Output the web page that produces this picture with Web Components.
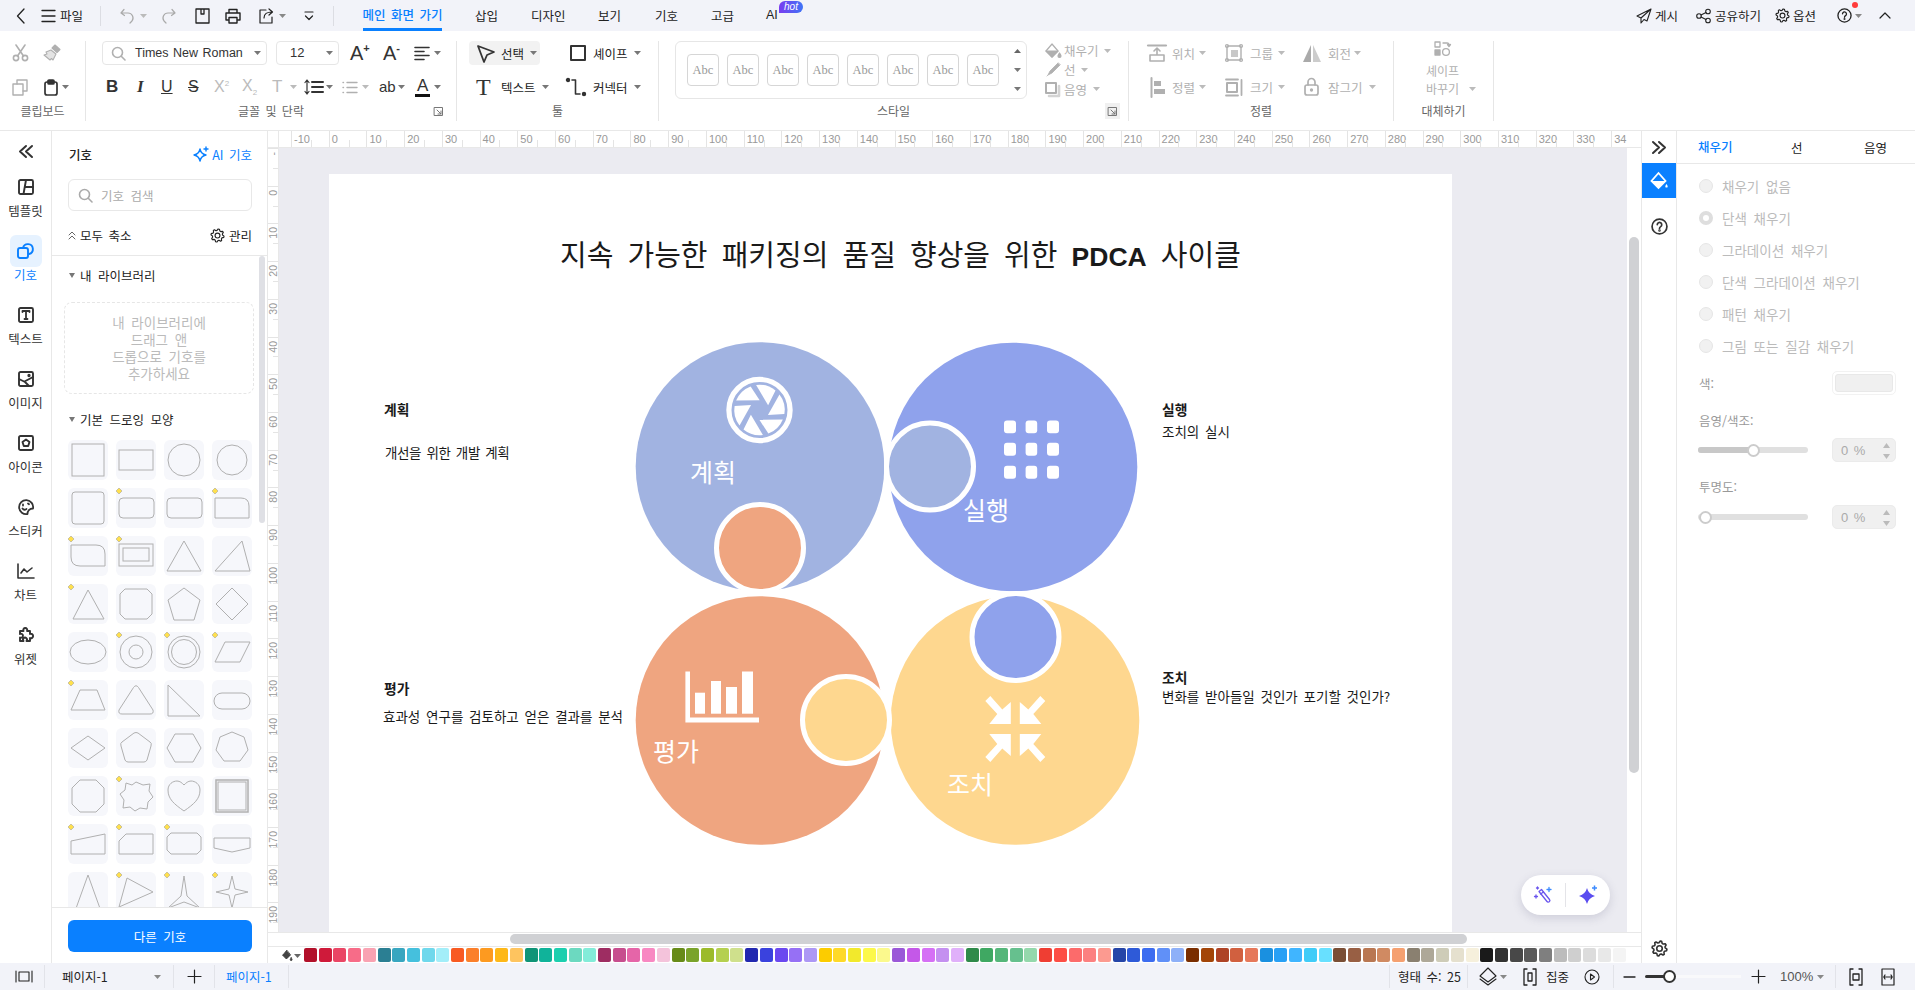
<!DOCTYPE html>
<html lang="ko"><head><meta charset="utf-8"><title>PDCA</title>
<style>
html,body{margin:0;padding:0;height:100%;overflow:hidden;background:#fff}
body{font:12.5px/1.2 "Noto Sans CJK KR","Noto Sans",sans-serif;color:#222;word-spacing:2px}
</style></head><body>
<x-app></x-app>
<script>
const BLUE='#0a80ff';
const BASE=`:host{display:block;box-sizing:border-box}*{box-sizing:border-box}
.r{display:grid;align-items:center;white-space:nowrap}.c{display:flex;align-items:center;min-width:0;white-space:nowrap}
svg{display:block;flex:none;overflow:visible}.mut{color:#aaa}.lat{font-family:"Liberation Sans",sans-serif}`;
const row=(x0,items,h)=>{let cols=[];for(let i=0;i<items.length-1;i++)cols.push((items[i+1][0]-items[i][0])+'px');cols.push('auto');
 return `<div class="r" style="padding-left:${items[0][0]-x0}px;height:${h}px;grid-template-columns:${cols.join(' ')}">`+items.map(i=>`<div class="c">${i[1]}</div>`).join('')+`</div>`};
const S=(inner,w=16,h=w,vw=w,vh=h,sw=1.3)=>`<svg width="${w}" height="${h}" viewBox="0 0 ${vw} ${vh}" fill="none" stroke="currentColor" stroke-width="${sw}" stroke-linecap="round" stroke-linejoin="round">${inner}</svg>`;
const col=(c,s)=>`<span style="color:${c};display:inline-flex;align-items:center">${s}</span>`;
const caret=(c='#888')=>`<svg width="7" height="4" viewBox="0 0 7 4"><path d="M0 0h7L3.5 4z" fill="${c}"/></svg>`;
const gearPath=(cx,cy,R,r,n=8)=>{let d='';for(let i=0;i<n*4;i++){const a=i*Math.PI*2/(n*4)-Math.PI/2+Math.PI/(n*4);const rr=(i%4<2)?R:r;d+=(i?'L':'M')+(cx+rr*Math.cos(a)).toFixed(2)+' '+(cy+rr*Math.sin(a)).toFixed(2)}return d+'Z'};
const gear=(s=16,sw=1.2)=>S(`<path d="${gearPath(8,8,7,5.4)}"/><circle cx="8" cy="8" r="2.6"/>`,s,s,16,16,sw);
const help=(s=16,sw=1.4)=>S(`<circle cx="8" cy="8" r="7"/><path d="M5.9 6.2a2.1 2.1 0 1 1 3.2 1.9c-.8.5-1.1.9-1.1 1.8"/><circle cx="8" cy="11.8" r=".4" fill="currentColor"/>`,s,s,16,16,sw);
const I={
 back:S('<path d="M8 1 1.5 8 8 15"/>',9,16,9,16,1.3),
 menu:S('<path d="M0 1.5h13M0 7h13M0 12.5h13"/>',13,14,13,14,1.3),
 undo:S('<path d="M4 1.5 1 5l3.5 2.5M1.5 5H8a5 5 0 0 1 4 8l-2 2"/>',14,16,14,16,1.2),
 redo:S('<path d="M10 1.5 13 5 9.5 7.5M12.5 5H6a5 5 0 0 0-4 8l2 2"/>',14,16,14,16,1.2),
 save:S('<path d="M1 1h13v14H1zM6 1v5h3V1"/>',15,16,15,16,1.3),
 print:S('<path d="M4 5V1.5h8V5M3.5 12H1V5h14v7h-2.5"/><path d="M4 9.5h8V15H4z"/>',16,16,16,16,1.4),
 export:S('<path d="M7 2H1v13h12V9"/><path d="M5 10c0-4 3-6 8-6M10 1l3.5 3L10 7"/>',15,16,15,16,1.2),
 more:S('<path d="M1 1h8M1.5 5 5 8.5 8.5 5"/>',10,10,10,10,1.2),
 send:S('<path d="M15 1 1 8l4 2zM15 1 5 10v5l3-3.5 3 1.5z"/>',16,16,16,16,1.1),
 share:S('<circle cx="3" cy="8" r="2.3"/><circle cx="12" cy="3.5" r="2.3"/><circle cx="12" cy="12.5" r="2.3"/><path d="M5 7l5-2.5M5 9l5 2.5"/>',15,16,15,16,1.1),
 up:S('<path d="M1 6 6 1l5 5"/>',12,7,12,7,1.2),
 cut:S('<circle cx="4" cy="14" r="2.6"/><circle cx="13" cy="14" r="2.6"/><path d="M5.5 12 13 1M11.5 12 4 1"/>',17,18,17,18,1.6),
 brush:S('<path d="M12 1l5 4.5-3 3L9 4z" fill="currentColor"/><path d="M8 6l5 4-3 6-1.5-1.5L7 16 1 11l3-1-1-2z" fill="currentColor" fill-opacity=".35"/>',18,18,18,18,1.1),
 copy:S('<path d="M1 5h10v11H1z"/><path d="M5 5V1h10v11h-4"/>',16,17,16,17,1.4),
 paste:S('<rect x="1" y="3" width="12" height="13" rx="2"/><rect x="4" y="1" width="6" height="4" rx="1" fill="currentColor"/>',14,17,14,17,1.7),
 search:S('<circle cx="6.5" cy="6.5" r="5"/><path d="M10.5 10.5 14 14"/>',14,14,14,14,1.6),
 align:S('<path d="M0 1.5h14M0 5.5h9M0 9.5h14M0 13.5h9"/>',14,15,14,15,1.6),
 spacing:S('<path d="M3 1v14M1 3.5 3 1l2 2.5M1 12.5 3 15l2-2.5"/><path d="M8 3h11M8 8h11M8 13h11" stroke-width="2"/>',19,16,19,16,1.2),
 list:S('<path d="M5 2.5h10M5 7.5h10M5 12.5h10M1 2.5h.5M1 7.5h.5M1 12.5h.5"/>',16,15,16,15,1.4),
 cursor:S('<path d="M2 2l16 6-7 3-3 7z"/>',19,19,19,19,1.8),
 square:S('<rect x="1" y="1" width="14" height="14"/>',16,16,16,16,2),
 conn:S('<circle cx="2" cy="2" r="1.4" fill="currentColor"/><path d="M6 2h3.5v14H14"/><circle cx="18" cy="16" r="1.4" fill="currentColor"/>',20,18,20,18,1.6),
 bucket:S('<path d="M7 1 1 8l6 6 6-6z"/><path d="M1 8h12l-6 6z" fill="currentColor"/><path d="M14.5 10c1 1.5 1.5 2 1.5 3a1.5 1.5 0 0 1-3 0c0-1 .5-1.5 1.5-3z" fill="currentColor"/>',17,16,17,16,1.2),
 pen:S('<path d="M13 1 5 9l-2 4 4-2 8-8z" fill="currentColor"/><path d="M2 14l1-1"/>',16,15,16,15,.8),
 shade:S('<rect x="1" y="1" width="10" height="10" stroke-width="2"/><path d="M4 14h10V4" stroke-width="2.6" opacity=".55"/>',15,15,15,15,1),
 pos:S('<path d="M0 1.5h18" stroke-width="2.2"/><path d="M9 4v6M6 7l3-3 3 3M2 11h14v6H2z" stroke-width="1.6"/>',18,19,18,19,1.5),
 alignL:S('<path d="M1.5 0v19" stroke-width="2"/><rect x="4" y="3" width="7" height="5" fill="currentColor" stroke="none"/><rect x="4" y="11" width="11" height="5" fill="currentColor" stroke="none"/>',16,19,16,19,1),
 group:S('<rect x="2" y="2" width="14" height="14" stroke-width="1.4"/><rect x="6" y="6" width="7" height="7" fill="currentColor" stroke="none" opacity=".7"/><circle cx="2" cy="2" r="1.5"/><circle cx="16" cy="2" r="1.5"/><circle cx="2" cy="16" r="1.5"/><circle cx="16" cy="16" r="1.5"/>',18,18,18,18,1.2),
 size:S('<path d="M1 1.5h12M1 17.5h12M16.5 2v15" stroke-width="1.8"/><rect x="2" y="5" width="10" height="9" stroke-width="2"/>',18,19,18,19,1.2),
 flip:`<svg width="18" height="17" viewBox="0 0 18 17"><path d="M8 0v17H0z" fill="#aaa"/><path d="M10 0v17h8z" fill="#ccc"/></svg>`,
 lock:S('<rect x="1" y="7" width="13" height="10" rx="2"/><path d="M4 7V4a3.5 3.5 0 0 1 7 0v3"/><circle cx="7.5" cy="12" r=".8" fill="currentColor"/>',15,18,15,18,1.7),
 replace:S('<rect x="1" y="1" width="5" height="5" /><rect x="1" y="9" width="5" height="5" fill="currentColor"/><circle cx="12" cy="11" r="3.4"/><path d="M9 2h4a2 2 0 0 1 2 2v1M13.5 3.5 15 5.5l1.5-2" />',18,16,18,16,1.3),
 launch:S('<rect x=".5" y=".5" width="8" height="8" /><path d="M3 3l4 4M7 4v3H4"/>',9,9,9,9,1),
 side:S('<path d="M1 1v11M17 1v11M4 2h10v9H4z"/>',18,13,18,13,1.1),
 plus:S('<path d="M6.5 0v13M0 6.5h13"/>',13,13,13,13,1.2),
 layers:S('<path d="M9 1l8 8-8 6-8-6z"/><path d="M1 12l8 6 8-6"/>',18,19,18,19,1.1),
 focus:S('<path d="M4 1H1v16h3M10 1h3v16h-3"/><rect x="5" y="5" width="4" height="8"/>',14,18,14,18,1.3),
 play:S('<circle cx="8" cy="8" r="7"/><path d="M6.5 5l4 3-4 3z"/>',16,16,16,16,1.1),
 fit:S('<path d="M4 1H1v16h3M10 1h3v16h-3"/><rect x="4" y="6" width="6" height="6"/>',14,18,14,18,1.3),
 fitw:S('<path d="M1 1v16h12V1zM3 9h8M4 7 2.8 9 4 11M10 7l1.2 2L10 11"/>',14,18,14,18,1.2),
 dbl:S('<path d="M7 1 1 6.5 7 12M13 1 7 6.5 13 12"/>',14,13,14,13,2),
 dblr:S('<path d="M1 1l6 5.5L1 12M7 1l6 5.5L7 12"/>',14,13,14,13,2),
 star:S('<path d="M8 3q1 5 6 6-5 1-6 6-1-5-6-6 5-1 6-6z"/><path d="M14 1v4M12 3h4"/>',17,17,17,17,1.4),
 chevUp:S('<path d="M1 4l3-3 3 3M1 8l3-3 3 3"/>',8,9,8,9,1),
};
const rail={
 tpl:S('<rect x="1" y="1" width="14" height="14" rx="1.5"/><path d="M5.5 15 8 1M7 8h8"/>',16,16,16,16,1.9),
 sym:S('<rect x="1" y="5" width="10" height="10" rx="2"/><path d="M6 5a5 5 0 1 1 6 6"/>',17,16,17,16,1.9),
 text:S('<rect x="1" y="1" width="14" height="14" rx="1.5"/><path d="M4.5 5V4h7v1M8 4v8M6.5 12h3" stroke-width="1.8"/>',16,16,16,16,1.9),
 img:S('<rect x="1" y="1" width="14" height="14" rx="1.5"/><path d="M1 8l6 3 4 4M6.5 10.5 15 6"/><circle cx="11" cy="4.5" r=".7" fill="currentColor"/>',16,16,16,16,1.9),
 icon:S('<rect x="1" y="1" width="14" height="14" rx="1.5"/><path d="M8 4.5 11.5 7 10.2 11H5.8L4.5 7z"/>',16,16,16,16,1.9),
 sticker:S('<path d="M15 9.5A7 7 0 1 0 9.5 15c0-3 2-5.5 5.5-5.5z"/><path d="M5 5.5v1M10 4.5l1 .8M4.5 9.5c1 1.5 2.5 1.5 4 .5"/>',16,16,16,16,1.8),
 chart:S('<path d="M1 1v14h16"/><path d="M4 10l3-4 3 3 5-4"/>',18,16,18,16,1.6),
 widget:S('<path d="M3 5h3.5a2 2 0 1 1 3.5 0h3v3a2.2 2.2 0 1 1 0 4v3H9.5a2 2 0 1 0-3 0H3v-3.5a2 2 0 1 0 0-3.5z" transform="translate(0 -1)"/>',17,16,17,16,1.9)
};

class Base extends HTMLElement{connectedCallback(){if(this.shadowRoot)return;this.attachShadow({mode:'open'}).innerHTML=`<style>${BASE}${this.css()}</style>${this.html()}`;}css(){return''}html(){return'<slot></slot>'}}
const def=(n,c)=>customElements.define(n,c);

def('x-titlebar',class extends Base{
 css(){return`:host{height:31px;background:#f2f3f9}.sep{width:1px;height:20px;background:#dcdde3}
 .tab{height:31px;display:flex;align-items:center;padding-bottom:1px}.on{color:${BLUE};border-bottom:3px solid ${BLUE};width:79px;justify-content:center;padding-bottom:0;font-weight:500}
 .ai{position:relative}.hot{position:absolute;left:13px;top:1px;width:24px;height:12px;border-radius:6px 6px 6px 0;background:linear-gradient(90deg,#7a3cf0,#3f74f6);color:#fff;font:italic 10px/12px "Liberation Sans",sans-serif;text-align:center}`}
 html(){const t=x=>`<div class="tab">${x}</div>`;const g='#aaa';
 return row(0,[[16,I.back],[42,I.menu],[60,'파일'],[100,'<div class="sep"></div>'],[120,col(g,I.undo)],[140,caret('#bbb')],[162,col(g,I.redo)],[195,I.save],[225,I.print],[259,I.export],[279,caret()],[304,I.more],[333,'<div class="sep"></div>'],
 [363,`<div class="tab on">메인 화면 가기</div>`],[475,t('삽입')],[531,t('디자인')],[598,t('보기')],[655,t('기호')],[711,t('고급')],[766,`<div class="tab ai lat" style="overflow:visible">AI<span class="hot">hot</span></div>`],
 [1636,I.send],[1655,'게시'],[1696,I.share],[1715,'공유하기'],[1775,gear(15)],[1793,'옵션'],[1837,`<span style="position:relative;display:block">${help(15)}<span style="position:absolute;left:15px;top:-6px;width:6px;height:6px;border-radius:50%;background:#ff3b3b"></span></span>`],[1855,caret()],[1879,I.up]],31)}
});

def('rb-group',class extends Base{
 css(){return`:host{height:80px;margin-top:10px;border-right:1px solid #e6e6e6;flex:none}.b{height:60px}.l{display:grid;grid-template-columns:1fr auto 1fr;align-items:center;height:20px;color:#666;font-size:12px}.l b{font-weight:400}.lz{grid-column:3;justify-self:end;margin-right:10px;width:15px;height:16px;display:flex;align-items:center;justify-content:center;color:#777}.lz.h{background:#f0f0f0;margin-right:8px}`}
 html(){const z=this.getAttribute('launch');return `<div class="b"><slot></slot></div><div class="l"><b style="grid-column:2">${this.getAttribute('label')}</b>${z!=null?`<div class="lz ${z}">${I.launch}</div>`:''}</div>`}
});

def('x-abc',class extends Base{
 css(){return`:host{width:32px;height:32px;border:1px solid #d6d6d6;border-radius:4px;display:flex;align-items:center;justify-content:center;font:12.5px "Liberation Serif",serif;color:#999;background:#fff}`}
});

def('x-ribbon',class extends Base{
 css(){return`:host{height:100px;background:#fff;border-bottom:1px solid #e8e8e8;display:flex}
 .g{color:#b0b0b0}.k{color:#333}.ff{height:24px;border:1px solid #e6e6e6;border-radius:4px;display:flex;align-items:center;background:#fff;position:relative}
 .t{font-family:"Liberation Sans",sans-serif;color:#333}.sel{height:24px;width:71px;background:#f2f2f2;border-radius:4px;display:flex;align-items:center;padding-left:7px}
 .rr+.rr{margin-top:10px}.gal{width:352px;height:58px;border:1px solid #e6e6e6;border-radius:6px;display:flex;align-items:center;gap:8px;padding-left:11px;position:relative}
 .arr{margin-left:auto;width:18px;height:56px;display:flex;flex-direction:column;align-items:center;justify-content:space-between;padding:7px 0}
 .st{display:flex}.fills{margin-left:18px;color:#b0b0b0;display:flex;flex-direction:column;justify-content:space-around;height:58px}.fills .r{height:20px}`}
 html(){
 const g=x=>col('#b0b0b0',x),k=x=>col('#333',x),cg=caret('#bbb'),ck=caret('#777');
 const t=(s,st='')=>`<span class="t" style="${st}">${s}</span>`;
 const group1=`<rb-group label="클립보드" style="width:86px"><div class="rr">${row(0,[[12,g(I.cut)],[43,g(I.brush)]],24)}</div><div class="rr">${row(0,[[12,g(I.copy)],[44,k(I.paste)],[62,ck]],24)}</div></rb-group>`;
 const group2=`<rb-group label="글꼴 및 단락" launch="" style="width:371px">
 <div class="rr">${row(86,[[102,`<div class="ff" style="width:165px;padding-left:8px">${g(I.search)}<span class="t" style="margin-left:10px;font-size:12.5px;word-spacing:1px">Times New Roman</span><span style="position:absolute;right:5px;top:9px">${ck}</span></div>`],[276,`<div class="ff" style="width:63px;padding-left:13px"><span class="t" style="font-size:13px">12</span><span style="position:absolute;right:5px;top:9px">${ck}</span></div>`],
 [350,t(`<span style="font-size:20px">A</span><sup style="font-size:11px;font-weight:700;vertical-align:8px">+</sup>`)],[383,t(`<span style="font-size:20px">A</span><sup style="font-size:11px;font-weight:700;vertical-align:8px">-</sup>`)],[415,k(I.align)],[434,ck]],24)}</div>
 <div class="rr">${row(86,[[106,t('B','font-size:17px;font-weight:700')],[134,t('I','font-size:17px;font-style:italic;font-family:Liberation Serif;font-weight:700;margin-left:3px')],[161,t('U','font-size:16px;text-decoration:underline')],[188,t('S','font-size:16px;text-decoration:line-through')],
 [214,`<span class="t" style="color:#bbb;font-size:16px">X<sup style="font-size:8px">2</sup></span>`],[242,`<span class="t" style="color:#bbb;font-size:16px">X<sub style="font-size:8px">2</sub></span>`],[272,`<span class="t" style="color:#bbb;font-size:17px">T</span>`],[290,cg],[304,k(I.spacing)],[326,ck],[342,g(I.list)],[362,cg],[379,t('ab','font-size:15px')],[398,ck],[415,`<span class="t" style="font-size:17px;border-bottom:3px solid #111;line-height:17px;padding:0 2px">A</span>`],[434,ck]],24)}</div></rb-group>`;
 const group3=`<rb-group label="툴" style="width:202px">
 <div class="rr">${row(457,[[469,`<div class="sel">${k(I.cursor)}<span style="margin-left:6px">선택</span><span style="margin-left:6px">${ck}</span></div>`],[570,k(I.square)],[593,'셰이프'],[634,ck]],24)}</div>
 <div class="rr">${row(457,[[476,`<span style="font:24px/24px 'Liberation Serif',serif;color:#333">T</span>`],[501,'텍스트'],[542,ck],[566,k(I.conn)],[593,'커넥터'],[634,ck]],24)}</div></rb-group>`;
 const tiles=[1,2,3,4,5,6,7,8].map(()=>'<x-abc>Abc</x-abc>').join('');
 const group4=`<rb-group label="스타일" launch="h" style="width:470px"><div class="st" style="padding-left:16px"><div class="gal">${tiles}<div class="arr">${caret('#666').replace('<path','<path transform="rotate(180 3.5 2)"')}${ck}${ck}</div></div>
 <div class="fills">${row(0,[[0,g(I.bucket)],[19,'채우기'],[59,cg]],20)}${row(0,[[0,g(I.pen)],[19,'선'],[36,cg]],20)}${row(0,[[0,g(I.shade)],[19,'음영'],[48,cg]],20)}</div></div></rb-group>`;
 const group5=`<rb-group label="정렬" style="width:265px;color:#b0b0b0">
 <div class="rr">${row(1129,[[1148,g(I.pos)],[1172,'위치'],[1199,cg],[1225,g(I.group)],[1250,'그룹'],[1278,cg],[1303,I.flip],[1328,'회전'],[1354,cg]],24)}</div>
 <div class="rr">${row(1129,[[1150,g(I.alignL)],[1172,'정렬'],[1199,cg],[1225,g(I.size)],[1250,'크기'],[1278,cg],[1304,g(I.lock)],[1328,'잠그기'],[1369,cg]],24)}</div></rb-group>`;
 const group6=`<rb-group label="대체하기" style="width:100px;color:#b0b0b0"><div style="display:flex;flex-direction:column;align-items:center;font-size:12px;line-height:17.5px;padding-right:2px">${g(I.replace)}<span style="margin-top:5px">셰이프</span><span style="position:relative">바꾸기<span style="position:absolute;left:43px;top:7px">${cg}</span></span></div></rb-group>`;
 return group1+group2+group3+group4+group5+group6}
});

def('x-rail-item',class extends Base{
 css(){return`:host{height:64px;display:flex;flex-direction:column;align-items:center;color:#333;padding-top:0}.i{width:32px;height:32px;border-radius:6px;display:flex;align-items:center;justify-content:center}
 :host([active]) {color:${BLUE}}:host([active]) .i{background:#e6f2ff}.t{margin-top:0;line-height:16px;height:16px}`}
 html(){return `<div class="i">${rail[this.getAttribute('icon')]}</div><div class="t"><slot></slot></div>`}
});
def('x-rail',class extends Base{
 css(){return`:host{width:52px;border-right:1px solid #e8e8e8;background:#fff;display:flex;flex-direction:column;align-items:center}.top{height:40px;width:100%;display:flex;align-items:center;justify-content:center;color:#333}.list{width:100%}`}
 html(){const it=[['tpl','템플릿'],['sym','기호',1],['text','텍스트'],['img','이미지'],['icon','아이콘'],['sticker','스티커'],['chart','차트'],['widget','위젯']];
 return `<div class="top">${I.dbl}</div><div class="list">`+it.map(i=>`<x-rail-item icon="${i[0]}" ${i[2]?'active':''}>${i[1]}</x-rail-item>`).join('')+`</div>`}
});

const D=(x,y)=>`<path d="M${x} ${y-3}L${x+3} ${y}L${x} ${y+3}L${x-3} ${y}Z" fill="#ffe04d" stroke="#999" stroke-width=".5"/>`;
const poly=p=>`<polygon points="${p}"/>`;
const shapes=[
 ['<rect x="4" y="4" width="32" height="32"/>'],['<rect x="3" y="10" width="34" height="20"/>'],['<circle cx="20" cy="20" r="16"/>'],['<circle cx="20" cy="20" r="15"/>'],
 ['<rect x="4" y="4" width="32" height="32" rx="3"/>'],['<rect x="3" y="10" width="35" height="20" rx="4"/>',1],['<rect x="3" y="10" width="35" height="20" rx="4"/>'],['<path d="M3 10H29Q37 10 37 18V30H3Z"/>',1],
 ['<path d="M3 9H28Q37 9 37 18V30H12Q3 30 3 21Z"/>',1],['<rect x="3" y="8" width="34" height="22"/><rect x="7" y="12" width="26" height="13"/>',1],[poly('20,5 37,35 3,35')],[poly('30,5 38,35 3,35')],
 [poly('20,6 36,35 5,35'),1],[poly('9,5 31,5 36,10 36,30 31,35 9,35 4,30 4,10')],[poly('20,4 36,16 30,36 10,36 4,16')],[poly('20,4 36,20 20,36 4,20')],
 ['<ellipse cx="20" cy="20" rx="18" ry="12"/>'],['<circle cx="20" cy="20" r="16"/><circle cx="20" cy="20" r="7"/>',1],['<circle cx="20" cy="20" r="16"/><circle cx="20" cy="20" r="12.5"/>',1],[poly('13,10 38,10 28,30 3,30'),1],
 [poly('12,10 29,10 37,30 3,30'),1],['<path d="M17.5 7.5Q20 4 22.500 7.500L37 30Q38 34 34 34H6Q2 34 3 30Z"/>'],[poly('4,5 36,36 4,36')],['<rect x="2" y="13" width="36" height="16" rx="8"/>'],
 [poly('20,8 37,20 20,32 3,20')],['<path d="M18 5Q20 4 22 5L34 14Q36 15 35 18L31 32Q30 34 28 34H12Q10 34 9 32L5 18Q4 15 6 14Z"/>'],[poly('11,6 29,6 37,20 29,34 11,34 3,20')],[poly('20,4 32,9 36,22 28,33 12,33 4,22 8,9')],
 [poly('12,4 28,4 36,12 36,28 28,36 12,36 4,28 4,12')],['<path d="M20 6 27 9 34 8 33 15 37 21 32 26 31 33 24 32 19 35 14 31 7 32 8 24 4 18 9 14 10 7 16 9Z"/>',1],['<path d="M20 35C10 28 4 23 4 14C4 8 9 5 13 5C16 5 18 7 20 9C22 7 24 5 27 5C31 5 36 8 36 14C36 23 30 28 20 35Z"/>'],['<rect x="4" y="4" width="32" height="32" stroke-width="1.5"/><rect x="6" y="6" width="28" height="28"/>'],
 [poly('3,17 37,10 37,30 3,30'),1],[poly('10,10 37,10 37,30 3,30 3,17'),1],[poly('7,9 33,9 37,13 37,26 33,30 7,30 3,26 3,13'),1],[poly('2,14 38,14 38,24 20,28 2,24')],
 [poly('20,3 34,42 6,42')],[poly('11,6 37,20 3,35'),1],[poly('20,4 23,24 36,36 20,30 4,36 17,24'),1],[poly('20,4 23,17 36,20 23,23 20,36 17,23 4,20 17,17'),1],
];
def('x-symbols',class extends Base{
 css(){return`:host{width:216px;border-right:1px solid #e8e8e8;display:flex;flex-direction:column;background:#fff}
 .h1{height:24px;margin-top:11px;padding:0 15px 0 17px;display:flex;align-items:center;justify-content:space-between;font-weight:500}
 .ai{display:flex;align-items:center;color:${BLUE};gap:3px;font-weight:400}.q{margin:13px 15px 0 16px;height:32px;border:1px solid #e8e8e8;border-radius:6px;display:flex;align-items:center;padding-left:9px;color:#aaa;gap:9px;word-spacing:3px}
 .h2{height:24px;margin-top:12px;padding:0 15px 0 16px;display:flex;align-items:center;justify-content:space-between;border:0}.h2 span{display:flex;align-items:center;gap:4px}
 hr{margin:8px 0 0;border:0;border-top:1px solid #e8e8e8}
 .scr{flex:1;min-height:0;display:flex}.col{flex:1;overflow:hidden;min-width:0}.bar{width:6px;margin:0 2px 0 0;}.bar i{display:block;height:267px;background:#dfe0e5;border-radius:3px}
 .sec{height:20px;margin-top:9px;padding-left:17px;display:flex;align-items:center;gap:5px;word-spacing:3px}.tri{width:0;height:0;border:3.5px solid transparent;border-top:5px solid #777;margin-top:4px}
 .drop{margin:17px 0 0 12px;width:190px;height:92px;border:1px dashed #e6e6e6;border-radius:8px;display:flex;align-items:center;justify-content:center;text-align:center;color:#bbb;line-height:17px;font-size:13.5px;word-spacing:3px}
 .grid{margin:11px 0 0 16px;display:grid;grid-template-columns:repeat(4,40px);gap:8px}
 .tile{width:40px;height:40px;background:#f6f7fb;border-radius:6px;color:#b0b0b0}
 .foot{height:56px;border-top:1px solid #e8e8e8;padding:12px 15px 0 16px}.btn{height:32px;background:${BLUE};color:#fff;border-radius:6px;display:flex;align-items:center;justify-content:center;word-spacing:3px}`}
 html(){
 const tiles=shapes.map(s=>`<div class="tile"><svg width="40" height="40" viewBox="0 0 40 40" fill="none" stroke="currentColor" stroke-width="1">${s[0]}${s[1]?D(3,3):''}</svg></div>`).join('');
 return `<div class="h1"><span>기호</span><span class="ai">${I.star}AI 기호</span></div>
 <div class="q">${I.search}<span>기호 검색</span></div>
 <div class="h2"><span>${col('#666',I.chevUp)}모두 축소</span><span>${gear(15)}관리</span></div><hr>
 <div class="scr"><div class="col"><div class="sec"><i class="tri"></i>내 라이브러리</div><div class="drop"><div>내 라이브러리에<br>드래그 앤<br>드롭으로 기호를<br>추가하세요</div></div>
 <div class="sec" style="margin-top:15px"><i class="tri"></i>기본 드로잉 모양</div><div class="grid">${tiles}</div></div><div class="bar"><i></i></div></div>
 <div class="foot"><div class="btn">다른 기호</div></div>`}
});

def('x-hruler',class extends Base{
 css(){return`:host{height:17px;display:flex;overflow:hidden;border-bottom:1px solid #e8e8e8;background:#fff;padding-right:14px}.corner{width:11px;flex:none;border-right:1px solid #e8e8e8}.rul{flex:1;display:flex;min-width:0;overflow:hidden;padding-left:12px}
 .u{flex:0 0 37.72px;border-left:1px solid #e4e4e4;position:relative;font:11px/16px "Liberation Sans",sans-serif;color:#999;padding-left:2px;word-spacing:0;white-space:nowrap}.u::after{content:"";position:absolute;left:18.9px;bottom:0;height:7px;border-left:1px solid #e4e4e4}`}
 html(){let s='';for(let v=-10;v<=330;v+=10)s+=`<div class="u">${v}</div>`;s+=`<div class="u" style="flex:0 0 13px">34</div>`;return `<div class="corner"></div><div class="rul">${s}</div>`}
});
def('x-vruler',class extends Base{
 css(){return`:host{width:11px;flex:none;overflow:hidden;border-right:1px solid #e8e8e8;background:#fff}
 .u{height:37.72px;border-top:1px solid #e4e4e4;position:relative;font:10.5px/10px "Liberation Sans",sans-serif;color:#999;word-spacing:0}.u:first-child{margin-top:-12.2px}
 .u span{position:absolute;left:0;top:3px;writing-mode:vertical-rl;transform:rotate(180deg);width:10px}.u:first-child span{top:14px}.u::after{content:"";position:absolute;right:0;top:18.9px;width:5px;border-top:1px solid #e4e4e4}`}
 html(){let s='<div class="u"><span>-</span></div>';for(let v=0;v<=190;v+=10)s+=`<div class="u"><span>${v}</span></div>`;s+='<div class="u"></div>';return s}
});

def('dg-text',class extends Base{
 css(){return`:host{position:absolute;white-space:nowrap;line-height:1;color:#1a1a1a}`}
});

def('x-diagram',class extends Base{
 css(){return`:host{position:relative;width:1123px;height:800px;background:#fff;flex:none;margin:26px 0 0 50px}svg{position:absolute;left:0;top:0}`}
 html(){
 const A='#a1b3e1',B='#8fa2ec',C='#efa580',E='#fed78f';
 const bigs=[[760,466.5,A],[1013,467,B],[760,720.5,C],[1015,720.5,E]].map(c=>`<circle cx="${c[0]}" cy="${c[1]}" r="124.3" fill="${c[2]}"/>`).join('');
 const sm=[[760,548,C],[930,466.5,A],[846,720,E],[1015.5,637,B]].map(c=>`<circle cx="${c[0]}" cy="${c[1]}" r="43.5" fill="${c[2]}" stroke="#fff" stroke-width="5"/>`).join('');
 let blades='';for(let k=0;k<6;k++)blades+=`<path transform="rotate(${k*60})" d="M-3.4 -25A25.200 25.200 0 0 1 16 -19.500L8.600 -4.800Z" fill="#fff"/>`;
 const ap=`<g transform="translate(759.5 410)"><circle r="30.600" fill="none" stroke="#fff" stroke-width="5.200"/>${blades}</g>`;
 let gr='';[[1004,12],[1025.6,11.6],[1047,12]].forEach(c=>[[420.6,12.6],[442.8,13],[465.8,13]].forEach(r=>gr+=`<rect x="${c[0]}" y="${r[0]}" width="${c[1]}" height="${r[1]}" rx="3" fill="#fff"/>`));
 const ch=`<path d="M685.4 671.5h4.6v46h69v5h-73.600z" fill="#fff"/>`+[[695,692.7,10],[711,681,10],[726,687,11],[742,671.5,11]].map(b=>`<rect x="${b[0]}" y="${b[1]}" width="${b[2]}" height="${713.7-b[1]}" fill="#fff"/>`).join('');
 const ar=[[1,1],[-1,1],[1,-1],[-1,-1]].map(s=>`<polygon transform="translate(1015.3 729) scale(${s[0]} ${s[1]})" points="-4.500,-5 -4.500,-27 -13,-19.500 -25,-33 -30,-28 -18,-15 -26,-5" fill="#fff"/>`).join('');
 const T=(x,cy,sz,txt,st='')=>`<dg-text style="left:${x-329}px;top:${cy-174-sz/2}px;font-size:${sz}px;${st}">${txt}</dg-text>`;
 const w='color:#fff;';
 return `<svg width="1123" height="800" viewBox="329 174 1123 800">${bigs}${sm}${ap}${gr}${ch}${ar}</svg>`+
 T(560,253,29,`지속 가능한 패키징의 품질 향상을 위한 <span style="font:700 26.5px 'Liberation Sans',sans-serif">PDCA</span> 사이클`,'word-spacing:6px')+
 T(384,410,13.8,'계획','font-weight:700')+T(385,453,13.5,'개선을 위한 개발 계획','letter-spacing:-.4px')+
 T(1162,410,13.8,'실행','font-weight:700')+T(1162,432,13.5,'조치의 실시')+
 T(384,689,13.8,'평가','font-weight:700')+T(383,717,13.5,'효과성 연구를 검토하고 얻은 결과를 분석')+
 T(1162,678,13.8,'조치','font-weight:700')+T(1162,697,13.5,'변화를 받아들일 것인가 포기할 것인가?')+
 T(690,471.5,25,'계획',w)+T(963,509,25,'실행',w)+T(653,750.5,25,'평가',w)+T(947,783.5,25,'조치',w)}
});

def('x-float',class extends Base{
 css(){return`:host{position:absolute;right:17px;bottom:17px;width:89px;height:40px;border-radius:20px;background:#fff;box-shadow:0 3px 10px rgba(70,70,110,.18);display:flex;align-items:center}.s{width:1px;height:24px;background:#e4e4e8}.i{width:44px;display:flex;justify-content:center}`}
 html(){return `<div class="i"><svg width="19" height="18" viewBox="0 0 19 18" fill="none" stroke="#6a55ee" stroke-width="1.3" stroke-linecap="round" stroke-linejoin="round"><path d="M5 5.500 7.500 3.500 15.500 13.500a1.500 1.500 0 0 1-2.500 2z"/><path d="M6.500 8 9.500 6"/><path d="M15 1.500v4M13 3.500h4" stroke="#3d8bff"/><path d="M2 9v3M.5 10.500h3"/><path d="M3.500 1v2M2.500 2h2"/></svg></div><div class="s"></div><div class="i"><svg width="20" height="20" viewBox="0 0 20 20"><path d="M9 3Q10.500 9 17 11 10.500 13 9 19 7.500 13 1 11 7.500 9 9 3z" fill="#5b4df0"/><path d="M16.500 .5v5M14 3h5" stroke="#3d8bff" stroke-width="1.500"/></svg></div>`}
});

def('x-palette',class extends Base{
 css(){return`:host{height:16px;display:flex;align-items:center;background:#fff;overflow:hidden}.b{width:36px;padding-left:14px;display:flex;align-items:center;gap:1px;color:#444}.s{width:13px;height:14px;border-radius:2px;flex:none;margin-right:1.71px}`}
 html(){const c='#b2102a #cf1a3a #ea4565 #f76c88 #f9a2b2 #2b7f93 #38a6c0 #45c0dd #6fd8ec #a3eef9 #f85a22 #fb7f2b #fd9a20 #feb818 #fec45f #0f9477 #10b39a #1ccfaf #6cd9c0 #83ecd9 #9e2d62 #c74d8e #e565a8 #f888c2 #f4c3db #678b18 #7aa32b #9cbb2a #b5d050 #cfe08c #2228b0 #3a42de #6b48f0 #9670f5 #ad98f5 #fccc00 #fed928 #f2e92c #fcf84a #fbf98d #9a58d8 #c458e8 #d570f5 #c490f0 #e0b0fa #2f8a4a #3fa862 #55b67a #66c08e #94d8ac #ef3e33 #fd4d45 #fc6b6b #fc8080 #fc9a90 #2545a8 #2e5ad8 #3c6cf0 #6090f8 #8eb0f8 #7a2e00 #a34508 #ae4326 #d1603f #e6785a #1a90e0 #28a0f5 #40b5ff #40ccf8 #68e0ff #7a4e35 #985f44 #b97752 #d08a62 #f5a070 #8a8070 #aea898 #ceccb8 #e5e0ce #f6f0dc #1a1a1a #333333 #484848 #5a5a5a #7f7f7f #bcbcbc #cfcfcf #dcdcdc #e8e8e8 #f4f4f4'.split(' ');
 return `<div class="b">${S('<path d="M5 1 1 6l4 4 4-4zM5 10l4-4H1z" fill="currentColor"/><path d="M10 9c.6 1 1 1.400 1 2a1 1 0 0 1-2 0c0-.6.400-1 1-2z" fill="currentColor"/>',11,13,12,13,1)}<span style="margin-top:1px">${caret('#666')}</span></div>`+c.map(x=>`<div class="s" style="background:${x}"></div>`).join('')}
});

def('x-center',class extends Base{
 css(){return`:host{flex:1;min-width:0;display:flex;flex-direction:column}.m{flex:1;min-height:0;display:flex}.cv{flex:1;min-width:0;background:#ebebf1;overflow:hidden;position:relative;display:flex;align-items:flex-start}
 .vs{width:14px;flex:none;padding:89px 2px 0 2px;border-left:0}.vs i{display:block;width:10px;height:536px;background:#d0d1d4;border-radius:5px}
 .hs{height:15px;background:#fff;border-top:1px solid #e8e8e8;border-bottom:1px solid #e8e8e8;padding:1px 0 0 242px}.hs i{display:block;width:957px;height:10px;background:#d0d1d4;border-radius:5px}`}
 html(){return `<x-hruler></x-hruler><div class="m"><x-vruler></x-vruler><div class="cv"><x-diagram></x-diagram><x-float></x-float></div><div class="vs"><i></i></div></div><div class="hs"><i></i></div><x-palette></x-palette>`}
});

def('x-rrail',class extends Base{
 css(){return`:host{width:36px;border-left:1px solid #e8e8e8;border-right:1px solid #e8e8e8;display:flex;flex-direction:column;align-items:center;color:#333;background:#fff}.t{height:32px;display:flex;align-items:center}.f{width:100%;height:35px;background:${BLUE};color:#fff;display:flex;align-items:center;justify-content:center}.h{margin-top:20px}.g{margin-top:auto;margin-bottom:6px}`}
 html(){return `<div class="t">${I.dblr}</div><div class="f"><svg width="19" height="18" viewBox="0 0 19 18" fill="#fff"><path d="M8.500 1 15.500 9 8.500 16 1.500 9z" fill="none" stroke="#fff" stroke-width="1.800"/><path d="M1.500 9h14l-7 7z"/><path d="M16.500 12c.8 1.200 1.200 1.700 1.200 2.400a1.200 1.200 0 0 1-2.400 0c0-.7.400-1.200 1.200-2.400z"/></svg></div><div class="h">${help(17,1.6)}</div><div class="g">${gear(17,1.5)}</div>`}
});

def('x-right',class extends Base{
 css(){return`:host{flex:1;min-width:0;background:#fff;color:#999}.tabs{height:33px;border-bottom:1px solid #e8e8e8;display:block;color:#222;margin-bottom:6px}
 .rd{height:32px;padding-left:22px;display:flex;align-items:center;gap:9px;color:#bbb;word-spacing:3px;font-size:13.5px}.rd i{width:14px;height:14px;border-radius:50%;background:#f1f1f1;border:1px solid #e6e6e6;display:block}.rd i.on{background:#fff;border:4px solid #dedede}
 .f{display:flex;align-items:center;padding:0 19px 0 22px;height:24px}.cb{margin-left:auto;width:64px;height:24px;border:1px solid #f2f2f2;border-radius:5px;padding:2px}.cb i{display:block;height:100%;background:#f0f0f0;border-radius:3px;border:1px solid #e8e8e8}
 .l{height:20px;padding-left:22px;display:flex;align-items:center;color:#999}
 .tr{width:110px;height:6px;border-radius:3px;background:#e0e0e0;position:relative;margin-left:-1px}.tr b{display:block;height:100%;background:#c8c8c8;border-radius:3px}.tr u{position:absolute;top:-3.500px;width:13px;height:13px;border-radius:50%;background:#fff;border:2px solid #ccc}
 .num{margin-left:auto;width:64px;height:24px;background:#f0f0f0;border:1px solid #ebebeb;border-radius:5px;display:flex;align-items:center;padding-left:8px;color:#aaa;font:13px "Liberation Sans",sans-serif;position:relative}
 .sp{position:absolute;right:5px;top:4px;display:flex;flex-direction:column;gap:6px}`}
 html(){const rd=[['채우기 없음'],['단색 채우기',1],['그라데이션 채우기'],['단색 그라데이션 채우기'],['패턴 채우기'],['그림 또는 질감 채우기']];
 const num=`<div class="num">0 %<div class="sp"><svg width="7" height="5" viewBox="0 0 7 5"><path d="M3.500 0 7 5H0z" fill="#bbb"/></svg><svg width="7" height="5" viewBox="0 0 7 5"><path d="M0 0h7L3.500 5z" fill="#bbb"/></svg></div></div>`;
 return `<div class="tabs">${row(0,[[21,`<span style="color:${BLUE};font-weight:500;line-height:32px">채우기</span>`],[114,'선'],[187,'음영']],32)}</div>`+
 rd.map(r=>`<div class="rd"><i class="${r[1]?'on':''}"></i>${r[0]}</div>`).join('')+
 `<div class="f" style="margin-top:9px"><span>색:</span><div class="cb"><i></i></div></div>
 <div class="l" style="margin-top:15px">음영/색조:</div>
 <div class="f" style="margin-top:8px"><div class="tr"><b style="width:55px"></b><u style="left:49px"></u></div>${num}</div>
 <div class="l" style="margin-top:14px">투명도:</div>
 <div class="f" style="margin-top:9px"><div class="tr"><u style="left:1px"></u></div>${num}</div>`}
});

def('x-status',class extends Base{
 css(){return`:host{height:27px;background:#f2f3f9}.s{width:1px;height:23px;background:#e2e3e9}.blue{color:${BLUE}}.tr{width:96px;height:3px;background:#f9f9fb;position:relative}.tr b{display:block;width:24px;height:3px;background:#333;border-radius:2px}.tr u{position:absolute;left:18px;top:-5px;width:13px;height:13px;border:2px solid #333;border-radius:50%;background:#fff}`}
 html(){const s='<div class="s"></div>';
 return row(0,[[15,I.side],[44,s],[62,'페이지-1'],[154,caret()],[173,s],[188,I.plus],[214,s],[226,'<span class="blue">페이지-1</span>'],[288,s],[1389,s],[1398,'형태 수: 25'],[1467,s],[1479,I.layers],[1500,caret()],[1523,I.focus],[1546,'집중'],[1584,I.play],[1613,s],[1624,S('<path d="M0 1h11"/>',11,2,11,2,1.3)],[1645,'<div class="tr"><b></b><u></u></div>'],[1752,I.plus],[1780,'<span class="lat" style="color:#555;font-size:13px">100%</span>'],[1817,caret()],[1835,s],[1849,I.fit],[1881,I.fitw]],27)}
});

def('x-app',class extends Base{
 css(){return`:host{width:1915px;height:990px;display:flex;flex-direction:column;overflow:hidden}.main{flex:1;min-height:0;display:flex}`}
 html(){return `<x-titlebar></x-titlebar><x-ribbon></x-ribbon><div class="main"><x-rail></x-rail><x-symbols></x-symbols><x-center></x-center><x-rrail></x-rrail><x-right style="flex:0 0 238px"></x-right></div><x-status></x-status>`}
});
</script></body></html>
